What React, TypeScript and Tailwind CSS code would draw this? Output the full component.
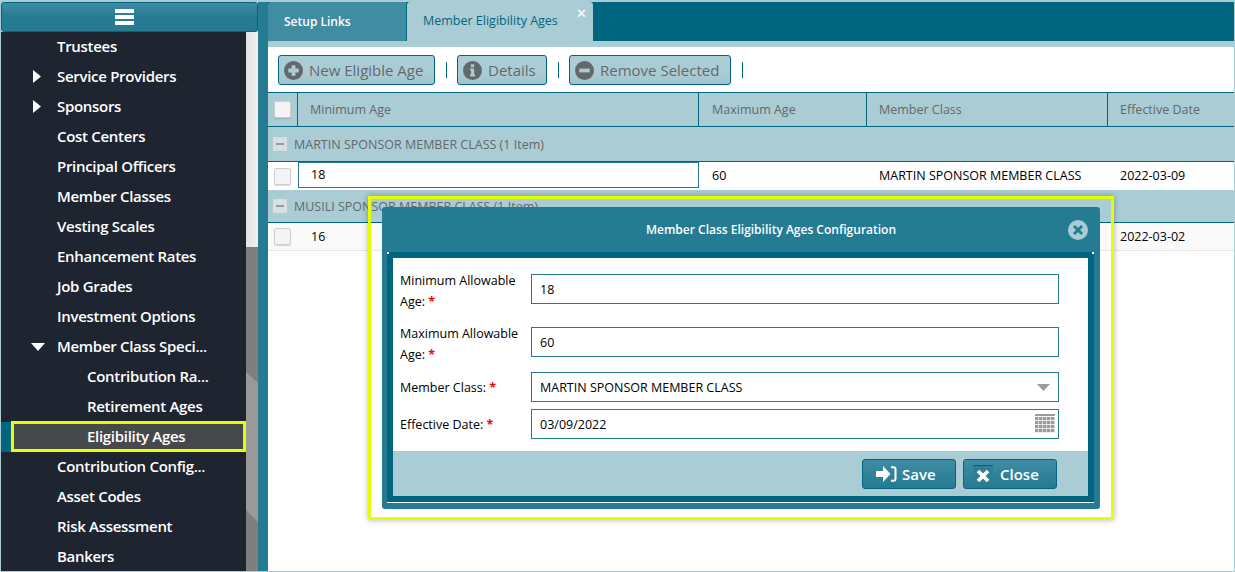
import { ReactNode } from "react";

const NAV = [
  { label: "Trustees", level: 1 },
  { label: "Service Providers", level: 1, arrow: "right" },
  { label: "Sponsors", level: 1, arrow: "right" },
  { label: "Cost Centers", level: 1 },
  { label: "Principal Officers", level: 1 },
  { label: "Member Classes", level: 1 },
  { label: "Vesting Scales", level: 1 },
  { label: "Enhancement Rates", level: 1 },
  { label: "Job Grades", level: 1 },
  { label: "Investment Options", level: 1 },
  { label: "Member Class Speci...", level: 1, arrow: "down" },
  { label: "Contribution Ra...", level: 2 },
  { label: "Retirement Ages", level: 2 },
  { label: "Eligibility Ages", level: 2, active: true },
  { label: "Contribution Config...", level: 1 },
  { label: "Asset Codes", level: 1 },
  { label: "Risk Assessment", level: 1 },
  { label: "Bankers", level: 1 },
];

function Sidebar() {
  return (
    <div className="w-[257px] flex flex-col shrink-0 min-h-0">
      <div className="h-[30px] mt-[2px] shrink-0 rounded-[3px] border border-[#00667f] bg-[linear-gradient(#3f8ca3,#257b92_50%,#257b92)] flex items-center justify-center pr-[11px]">
        <div className="w-[19px] flex flex-col gap-[2px]">
          <div className="h-[4px] bg-white" />
          <div className="h-[4px] bg-white" />
          <div className="h-[4px] bg-white" />
        </div>
      </div>
      <div className="flex-1 flex min-h-0 overflow-hidden">
        <div className="w-[245px] bg-[#1e2430] flex flex-col">
          {NAV.map((item) => (
            <div
              key={item.label}
              className={`h-[30px] shrink-0 flex items-center relative pb-[2px] text-[15px] font-semibold tracking-[-0.3px] text-white ${item.level === 2 ? "pl-[86px]" : "pl-[56px]"}`}
            >
              {item.arrow === "right" && (
                <svg className="absolute left-[32px] top-[8px]" width="8" height="13" viewBox="0 0 8 13">
                  <path d="M0 0 L8 6.5 L0 13 Z" fill="#fff" />
                </svg>
              )}
              {item.arrow === "down" && (
                <svg className="absolute left-[30px] top-[11px]" width="14" height="8" viewBox="0 0 14 8">
                  <path d="M0 0 L14 0 L7 8 Z" fill="#fff" />
                </svg>
              )}
              {item.active && (
                <>
                  <div className="absolute left-0 top-0 w-[11px] h-full bg-[#00667f]" />
                  <div className="absolute left-[10px] right-0 top-[-1px] bottom-0 bg-[#47484c] border-[3px] border-[#e6ff00]" />
                </>
              )}
              <span className="relative">{item.label}</span>
            </div>
          ))}
        </div>
        <div className="w-[12px] flex flex-col">
          <div className="h-[215px] shrink-0 bg-[linear-gradient(90deg,#e2e2e2,#f0f0f0)]" />
          <svg width="12" height="325" viewBox="0 0 12 325" className="shrink-0">
            <rect width="12" height="325" fill="#7f7f7f" />
            <path d="M0 125 L12 136 L12 275 L0 263 Z" fill="#9a9a9a" />
          </svg>
        </div>
      </div>
    </div>
  );
}

function Circle({ kind }: { kind: "plus" | "info" | "minus" }) {
  return (
    <svg width="19" height="19" viewBox="0 0 20 20" className="shrink-0">
      <circle cx="10" cy="10" r="10" fill="#65686b" />
      {kind === "plus" && <path d="M8 4.5h4v3.5h3.5v4H12v3.5H8V12H4.5V8H8z" fill="#aaccd5" />}
      {kind === "minus" && <rect x="4.5" y="8" width="11" height="4" fill="#aaccd5" />}
      {kind === "info" && <path d="M8.3 3.5h3.4v3H8.3zM7.5 8h4.2v6h1v2.2H7.5V14h1v-3.8h-1z" fill="#aaccd5" />}
    </svg>
  );
}

function ToolButton({ kind, label, className }: { kind: "plus" | "info" | "minus"; label: string; className: string }) {
  return (
    <div className={`h-[30px] rounded-[3px] border border-[#00667f] bg-[linear-gradient(#aaccd5,#aaccd5_60%,#9fc3cc)] flex items-center gap-[6px] pl-[5px] text-[15px] text-[#65686b] ${className}`}>
      <Circle kind={kind} />
      <span>{label}</span>
    </div>
  );
}

function Divider() {
  return <div className="w-px h-[16px] bg-[#00667f] ml-[11px] mr-[10px]" />;
}

function CheckBox({ className = "" }: { className?: string }) {
  return <div className={`w-[17px] h-[17px] rounded-[2px] bg-[#f4f4f4] border border-[#cfcfcf] shadow-[0_1px_1px_rgba(0,0,0,0.15)] ${className}`} />;
}

const COLS = "grid grid-cols-[30px_401px_168px_241px_126px]";

function GroupRow({ label, className }: { label: string; className: string }) {
  return (
    <div className={`bg-[#aaccd5] border-b border-[#00667f] flex items-center pl-[5px] text-[12.5px] text-[#65686b] gap-[7px] shrink-0 ${className}`}>
      <div className="w-[14px] h-[14px] bg-[#d9dfe3] flex items-center justify-center">
        <div className="w-[8px] h-[2px] bg-[#9a9a9a]" />
      </div>
      <span className="pt-[2px]">{label}</span>
    </div>
  );
}

function Main() {
  return (
    <div className="flex-1 flex flex-col min-w-0">
      <div className="h-[39px] mt-[2px] bg-[#00667f] flex items-end shrink-0">
        <div className="w-[139px] h-[39px] rounded-tl-[3px] bg-[#3f8ca3] flex items-center pl-[16px] text-[12px] font-semibold text-white border-r border-[#00667f]">
          Setup Links
        </div>
        <div className="w-[186px] h-[39px] rounded-t-[3px] bg-[#aaccd5] flex items-center pl-[16px] text-[12.5px] text-[#00667f] relative">
          Member Eligibility Ages
          <span className="absolute right-[6px] top-[5px] text-[13px] leading-none text-white">✕</span>
        </div>
      </div>
      <div className="h-[6px] bg-[#aaccd5] shrink-0" />
      <div className="h-[45px] bg-white flex items-center pl-[10px] pt-px shrink-0">
        <ToolButton kind="plus" label="New Eligible Age" className="w-[157px]" />
        <Divider />
        <ToolButton kind="info" label="Details" className="w-[90px]" />
        <Divider />
        <ToolButton kind="minus" label="Remove Selected" className="w-[162px]" />
        <Divider />
      </div>
      <div className={`${COLS} h-[35px] bg-[#aaccd5] border-y border-[#00667f] text-[12.5px] text-[#65686b] items-center shrink-0`}>
        <div className="h-full flex items-center justify-center border-r border-[#00667f]">
          <CheckBox />
        </div>
        <div className="h-full flex items-center pl-[12px] pt-[2px] border-r border-[#00667f]">Minimum Age</div>
        <div className="h-full flex items-center pl-[13px] pt-[2px] border-r border-[#00667f]">Maximum Age</div>
        <div className="h-full flex items-center pl-[12px] pt-[2px] border-r border-[#00667f]">Member Class</div>
        <div className="h-full flex items-center pl-[12px] pt-[2px]">Effective Date</div>
      </div>
      <GroupRow label="MARTIN SPONSOR MEMBER CLASS (1 Item)" className="h-[35px]" />
      <div className={`${COLS} h-[28px] text-[12.5px] text-black items-center shrink-0 bg-white`}>
        <div className="flex pl-[6px]"><CheckBox /></div>
        <div className="h-[26px] self-start flex items-center pl-[12px] pt-px border border-[#257b92]">18</div>
        <div className="pl-[13px]">60</div>
        <div className="pl-[12px]">MARTIN SPONSOR MEMBER CLASS</div>
        <div className="pl-[12px]">2022-03-09</div>
      </div>
      <GroupRow label="MUSILI SPONSOR MEMBER CLASS (1 Item)" className="h-[33px]" />
      <div className={`${COLS} h-[28px] text-[12.5px] text-black items-center shrink-0 bg-[#fafafa] border-b border-[#e6e6e6]`}>
        <div className="flex pl-[6px]"><CheckBox /></div>
        <div className="pl-[13px] pt-[2px]">16</div>
        <div />
        <div />
        <div className="pl-[12px] pt-[2px]">2022-03-02</div>
      </div>
      <div className="flex-1 bg-white" />
    </div>
  );
}

function Field({ label, children, tall }: { label: ReactNode; children: ReactNode; tall?: boolean }) {
  return (
    <div className={`flex items-center ${tall ? "h-[44px]" : "h-[30px]"}`}>
      <div className={`w-[138px] pl-[7px] text-[12.5px] leading-[21px] text-black ${tall ? "mt-[4px]" : ""}`}>{label}</div>
      <div className="w-[528px] h-[30px] border border-[#257b92] flex items-center px-[8px] pt-[2px] text-[12.5px] text-black relative">
        {children}
      </div>
    </div>
  );
}

const Req = () => <span className="text-[#f00] font-bold">*</span>;

function Dialog() {
  return (
    <div className="absolute left-[368px] top-[196px] w-[746px] h-[324px] border-[3px] border-[#e6ff00] shadow-[0_0_6px_rgba(0,0,0,0.3)] pl-[11px] pt-[8px]">
      <div className="w-[718px] h-[302px] rounded-[3px] bg-[#257b92] flex flex-col">
        <div className="h-[45px] flex items-center justify-center relative pl-[60px] text-[12px] font-semibold text-white shrink-0">
          Member Class Eligibility Ages Configuration
          <svg className="absolute right-[12px] top-[13px]" width="20" height="20" viewBox="0 0 20 20">
            <circle cx="10" cy="10" r="10" fill="#aaccd5" />
            <path d="M6 6 L14 14 M14 6 L6 14" stroke="#257b92" strokeWidth="3" />
          </svg>
        </div>
        <div className="ml-[5px] mr-[6px] h-[251px] border-b border-white rounded-t-[3px] relative">
          <div className="absolute left-0 top-0 w-[2px] h-[2px] bg-white" />
          <div className="absolute right-0 top-0 w-[2px] h-[2px] bg-white" />
          <div className="h-[250px] border-[6px] border-[#00667f] rounded-t-[3px] flex flex-col bg-white">
            <div className="flex-1 pt-[9px]">
              <Field tall label={<>Minimum Allowable<br />Age: <Req /></>}>18</Field>
              <div className="h-[9px]" />
              <Field tall label={<>Maximum Allowable<br />Age: <Req /></>}>60</Field>
              <div className="h-[8px]" />
              <Field label={<>Member Class: <Req /></>}>
                MARTIN SPONSOR MEMBER CLASS
                <svg className="absolute right-[8px] top-[11px]" width="13" height="7" viewBox="0 0 13 7">
                  <path d="M0 0 L13 0 L6.5 7 Z" fill="#9b9b9b" />
                </svg>
              </Field>
              <div className="h-[7px]" />
              <Field label={<>Effective Date: <Req /></>}>
                03/09/2022
                <svg className="absolute right-[3px] top-[4px]" width="20" height="19" viewBox="0 0 20 19">
                  <rect x="0" y="0" width="20" height="2" fill="#9b9b9b" />
                  {[3, 7, 11, 15].map((y) =>
                    [0, 4, 8, 12, 16].map((x) => <rect key={`${x}-${y}`} x={x} y={y} width="3.4" height="3.2" fill="#9b9b9b" />)
                  )}
                </svg>
              </Field>
            </div>
            <div className="h-[45px] bg-[#aaccd5] flex items-center justify-end gap-[7px] pr-[31px] shrink-0">
              <div className="w-[94px] h-[30px] rounded-[3px] border border-[#00667f] bg-[linear-gradient(#3f8ca3,#257b92)] flex items-center gap-[5px] pl-[13px] text-[15px] font-semibold text-white">
                <svg width="21" height="16" viewBox="0 0 21 16" className="shrink-0">
                  <path d="M0 5h7V0l7.5 8L7 16v-5H0z" fill="#fff" />
                  <path d="M15 1.2h2.5a2 2 0 0 1 2 2v9.6a2 2 0 0 1-2 2H15" fill="none" stroke="#fff" strokeWidth="2" />
                </svg>
                <span className="pt-px">Save</span>
              </div>
              <div className="w-[94px] h-[30px] rounded-[3px] border border-[#00667f] bg-[linear-gradient(#3f8ca3,#257b92)] flex items-center gap-[7px] pl-[9px] text-[15px] font-semibold text-white">
                <svg width="20" height="17" viewBox="0 0 20 17" className="shrink-0">
                  <rect x="0" y="0" width="20" height="17" fill="#2f8097" />
                  <rect x="0" y="0" width="20" height="1" fill="#00667f" />
                  <path d="M5 6 L15 16 M15 6 L5 16" stroke="#fff" strokeWidth="3.6" />
                </svg>
                <span className="pt-px">Close</span>
              </div>
            </div>
          </div>
        </div>
      </div>
    </div>
  );
}

export default function App() {
  return (
    <div className="relative w-[1235px] h-[572px] overflow-hidden flex bg-[#aaccd5] pl-px pr-px pb-px font-['Open_Sans',sans-serif]">
      <Sidebar />
      <div className="w-[10px] bg-[#257b92] shrink-0 mt-[2px]" />
      <Main />
      <Dialog />
    </div>
  );
}
